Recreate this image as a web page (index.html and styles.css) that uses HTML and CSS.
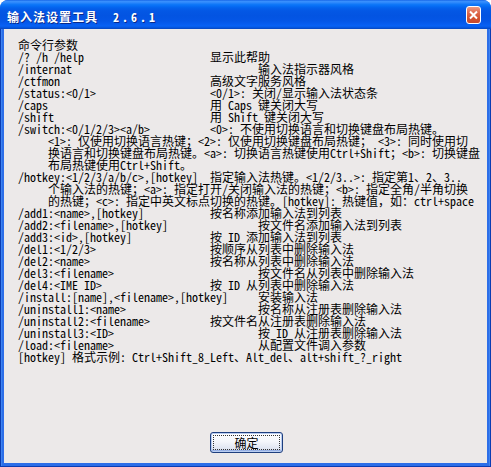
FILE: index.html
```html
<!DOCTYPE html>
<html lang="zh-CN">
<head>
<meta charset="utf-8">
<title>输入法设置工具 2.6.1</title>
<link rel="stylesheet" href="styles.css">
</head>
<body>
<div class="window">
  <div class="titlebar">
    <span class="title">输入法设置工具<span class="ver">2.6.1</span></span>
    <button class="close" aria-label="关闭">
      <svg width="15" height="18" viewBox="0 0 15 18"><path d="M4 5.5 L11 12.5 M11 5.5 L4 12.5" stroke="#fff" stroke-width="2" fill="none"/></svg>
    </button>
  </div>
  <div class="frame">
    <div class="client">
      <div class="help">
        <div class="line">命令行参数</div>
        <div class="row"><span class="cmd">/? /h /help</span><span class="desc">显示此帮助</span></div>
        <div class="row c5"><span class="cmd">/internat</span><span class="desc">输入法指示器风格</span></div>
        <div class="row"><span class="cmd">/ctfmon</span><span class="desc">高级文字服务风格</span></div>
        <div class="row"><span class="cmd">/status:&lt;0/1&gt;</span><span class="desc">&lt;0/1&gt;: 关闭/显示输入法状态条</span></div>
        <div class="row"><span class="cmd">/caps</span><span class="desc">用 Caps 键关闭大写</span></div>
        <div class="row"><span class="cmd">/shift</span><span class="desc">用 Shift 键关闭大写</span></div>
        <div class="row"><span class="cmd">/switch:&lt;0/1/2/3&gt;&lt;a/b&gt;</span><span class="desc">&lt;0&gt;: 不使用切换语言和切换键盘布局热键。</span></div>
        <div class="line indent">&lt;1&gt;: 仅使用切换语言热键；&lt;2&gt;: 仅使用切换键盘布局热键； &lt;3&gt;: 同时使用切</div>
        <div class="line indent">换语言和切换键盘布局热键。&lt;a&gt;: 切换语言热键使用Ctrl+Shift；&lt;b&gt;: 切换键盘</div>
        <div class="line indent">布局热键使用Ctrl+Shift。</div>
        <div class="row"><span class="cmd">/hotkey:&lt;1/2/3/a/b/c&gt;,[hotkey]</span><span class="desc">指定输入法热键。&lt;1/2/3..&gt;: 指定第1、2、3..</span></div>
        <div class="line indent">个输入法的热键；&lt;a&gt;: 指定打开/关闭输入法的热键；&lt;b&gt;: 指定全角/半角切换</div>
        <div class="line indent">的热键；&lt;c&gt;: 指定中英文标点切换的热键。[hotkey]: 热键值，如：ctrl+space</div>
        <div class="row"><span class="cmd">/add1:&lt;name&gt;,[hotkey]</span><span class="desc">按名称添加输入法到列表</span></div>
        <div class="row c5"><span class="cmd">/add2:&lt;filename&gt;,[hotkey]</span><span class="desc">按文件名添加输入法到列表</span></div>
        <div class="row"><span class="cmd">/add3:&lt;id&gt;,[hotkey]</span><span class="desc">按 ID 添加输入法到列表</span></div>
        <div class="row"><span class="cmd">/del1:&lt;1/2/3&gt;</span><span class="desc">按顺序从列表中删除输入法</span></div>
        <div class="row"><span class="cmd">/del2:&lt;name&gt;</span><span class="desc">按名称从列表中删除输入法</span></div>
        <div class="row c5"><span class="cmd">/del3:&lt;filename&gt;</span><span class="desc">按文件名从列表中删除输入法</span></div>
        <div class="row"><span class="cmd">/del4:&lt;IME ID&gt;</span><span class="desc">按 ID 从列表中删除输入法</span></div>
        <div class="row c5"><span class="cmd">/install:[name],&lt;filename&gt;,[hotkey]</span><span class="desc">安装输入法</span></div>
        <div class="row c5"><span class="cmd">/uninstall1:&lt;name&gt;</span><span class="desc">按名称从注册表删除输入法</span></div>
        <div class="row"><span class="cmd">/uninstall2:&lt;filename&gt;</span><span class="desc">按文件名从注册表删除输入法</span></div>
        <div class="row c5"><span class="cmd">/uninstall3:&lt;ID&gt;</span><span class="desc">按 ID 从注册表删除输入法</span></div>
        <div class="row c5"><span class="cmd">/load:&lt;filename&gt;</span><span class="desc">从配置文件调入参数</span></div>
        <div class="line">[hotkey] 格式示例: Ctrl+Shift_8_Left、Alt_del、alt+shift_?_right</div>
      </div>
      <div class="actions">
        <button class="ok">确定</button>
      </div>
    </div>
  </div>
</div>
</body>
</html>
```
FILE: styles.css
```css
* { box-sizing: border-box; }
html, body { margin: 0; padding: 0; background: #ffffff; }
body { width: 491px; height: 467px; overflow: hidden; }

.window {
  width: 491px;
  height: 467px;
  display: flex;
  flex-direction: column;
  border-radius: 8px 8px 0 0;
  overflow: hidden;
  background: #1b5fe2;
}

.titlebar {
  flex: none;
  height: 29px;
  display: flex;
  align-items: flex-start;
  padding: 0 10px 0 7px;
  background: linear-gradient(to bottom,
    #0a58e0 0px, #3d92fd 1px, #2a86fb 3px, #127af8 4px, #066ef5 6px,
    #0461ec 8px, #0457e4 11px, #0354e2 16px, #0456e6 21px,
    #065cef 24px, #0862f4 26px, #0452d8 28px, #0a44b8 29px);
}

.title {
  margin-top: 11px;
  font: bold 12px/12px "Noto Sans Mono CJK SC", "Noto Sans CJK SC", sans-serif;
  color: #ffffff;
  letter-spacing: 1px;
  text-shadow: 1px 1px 0 #0b2a8a;
  white-space: nowrap;
}

.ver { margin-left: 15px; letter-spacing: 3px; }

.close {
  margin-left: auto;
  margin-top: 6px;
  width: 15px;
  height: 18px;
  padding: 0;
  border: 1px solid #ffffff;
  border-radius: 3px;
  background: linear-gradient(to bottom, #ec9a84 0%, #df6a4e 35%, #d2512f 70%, #c84a2c 100%);
  display: flex;
  align-items: center;
  justify-content: center;
}
.close svg { display: block; margin: -1px; }

.frame {
  flex: 1;
  display: flex;
  padding: 0 4px 4px;
  background: #2c6ee8;
  box-shadow: inset 1px 0 0 #0b3cb2, inset -1px 0 0 #0b3cb2, inset 0 -1px 0 #0b3cb2,
              inset 2px 0 0 #3f84f0, inset -2px 0 0 #3f84f0;
}

.client {
  flex: 1;
  display: flex;
  flex-direction: column;
  background: #ece9e9;
  padding: 10px 0 10px 14px;
}

.help {
  font: 12px/12px "Noto Sans Mono CJK SC", "Liberation Mono", "Noto Sans CJK SC", monospace;
  color: #000000;
}

.line, .row { height: 12px; white-space: pre; }
.row { display: flex; }
.cmd { flex: none; width: 192px; }
.row.c5 .cmd { width: 240px; }
.indent { padding-left: 30px; }

.actions {
  margin-top: auto;
  display: flex;
  justify-content: center;
  padding-right: 12px;
}

.ok {
  width: 73px;
  height: 21px;
  padding: 0;
  border: 1px solid #1f3f7e;
  border-radius: 3px;
  background: linear-gradient(to bottom, #ffffff 0%, #f4f6fb 45%, #e1e6f2 80%, #c9d2e8 100%);
  box-shadow: inset 0 0 0 1px #b9cdf1, inset 0 -1px 0 1px #97b0e4;
  outline: 1px dotted #333;
  outline-offset: -4px;
  font: 12px/12px "Noto Sans CJK SC", sans-serif;
  color: #000000;
}
```
